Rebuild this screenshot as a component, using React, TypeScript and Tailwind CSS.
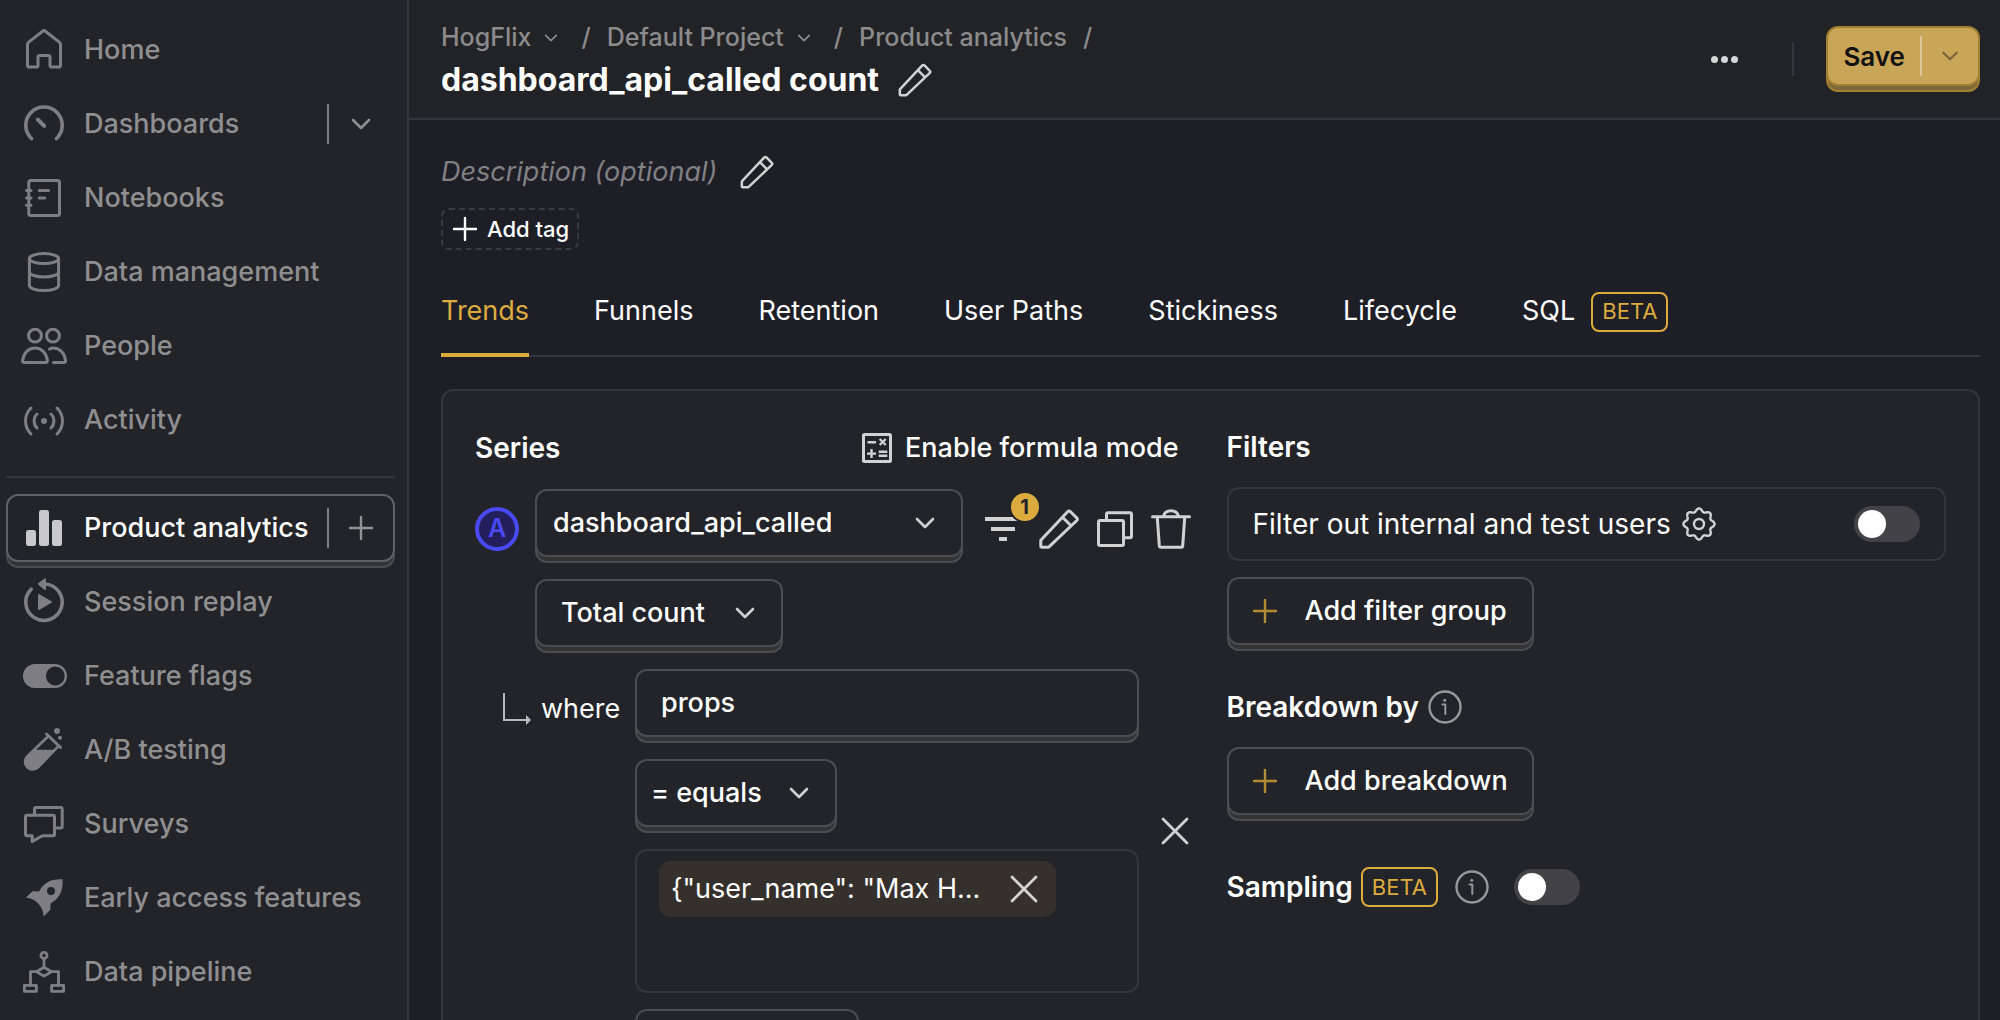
import type { ReactNode } from "react";

type IconProps = { className?: string };

function Svg({ size = 48, className = "size-12", children }: { size?: number; className?: string; children: ReactNode }) {
  return (
    <svg
      viewBox={`0 0 ${size} ${size}`}
      className={`shrink-0 ${className}`}
      fill="none"
      stroke="currentColor"
      strokeWidth={3}
      strokeLinecap="round"
      strokeLinejoin="round"
      aria-hidden="true"
    >
      {children}
    </svg>
  );
}

const HomeIcon = () => (
  <Svg>
    <path d="M7.5 18.5c0-1 .4-1.8 1.2-2.4L22.6 5.2c.8-.7 2-.7 2.8 0l13.9 10.9c.8.6 1.2 1.4 1.2 2.4v21c0 .9-.7 1.6-1.6 1.6h-7.3c-.9 0-1.6-.7-1.6-1.6v-8.2c0-1-.8-1.8-1.8-1.8h-8.400c-1 0-1.800.8-1.800 1.800v8.200c0 .9-.7 1.600-1.600 1.600H9.100c-.9 0-1.600-.7-1.600-1.600z" />
  </Svg>
);

const DashboardIcon = () => (
  <Svg>
    <path d="M11.5 38.5A18.2 18.2 0 1 1 36.5 38.5" strokeWidth={3.6} />
    <path d="M17.8 19.5l6.4 6.4" strokeWidth={4} />
  </Svg>
);

const NotebookIcon = () => (
  <Svg>
    <rect x="8.8" y="6.5" width="30.7" height="35" rx="2" />
    <path d="M6.5 16.5H11M6.5 24H11M6.5 31.3H11M19.3 16.5h9.2M19.3 24h5.4" />
  </Svg>
);

const DatabaseIcon = () => (
  <Svg>
    <ellipse cx="24" cy="10.6" rx="14.6" ry="5" />
    <path d="M9.4 10.6v27c0 2.7 6.5 4.9 14.6 4.9s14.6-2.2 14.6-4.9v-27M9.4 24c0 2.7 6.5 4.9 14.6 4.9s14.6-2.2 14.6-4.9" />
  </Svg>
);

const PeopleIcon = () => (
  <Svg>
    <circle cx="15" cy="13.7" r="6.4" />
    <circle cx="33" cy="13.7" r="6.4" />
    <path d="M4 40.4c-.8 0-1.5-.7-1.4-1.6C3.4 31 8.5 26 15 26s11.6 5 12.4 12.8c.1.9-.6 1.6-1.4 1.6zM29.5 27c1.100-.6 2.300-1 3.700-1 6.500 0 11.600 5 12.400 12.800.1.900-.6 1.600-1.400 1.600H33.500" />
  </Svg>
);

const ActivityIcon = () => (
  <Svg>
    <circle cx="24" cy="25" r="3" fill="currentColor" stroke="none" />
    <path d="M17 18c-3.8 3.4-3.8 10.6 0 14M31 18c3.8 3.4 3.8 10.6 0 14M11 12c-7.3 7.4-7.3 18.6 0 26M37 12c7.3 7.4 7.3 18.6 0 26" />
  </Svg>
);

const BarsIcon = () => (
  <Svg>
    <g fill="currentColor" stroke="none">
      <rect x="6" y="26" width="10" height="16" rx="2.5" />
      <rect x="19" y="6" width="10" height="36" rx="2.5" />
      <rect x="32" y="16" width="10" height="26" rx="2.5" />
    </g>
  </Svg>
);

const ReplayIcon = () => (
  <Svg>
    <path d="M11.2 11.2A18.2 18.2 0 1 0 25 6" strokeWidth={3.6} />
    <path d="M19 6l6-4.7v9.6z" fill="currentColor" strokeWidth={2} />
    <path d="M19 17v14l12-7z" fill="currentColor" strokeWidth={2} />
  </Svg>
);

const FlagIcon = () => (
  <Svg>
    <path
      d="M15 12h20a12 12 0 0 1 0 24H15a12 12 0 0 1 0-24zM35.3 14.6a9.4 9.4 0 1 0 0 18.8 9.4 9.4 0 0 0 0-18.8z"
      fill="currentColor"
      fillRule="evenodd"
      stroke="none"
    />
  </Svg>
);

const TestTubeIcon = () => (
  <Svg>
    <circle cx="37" cy="5" r="3" fill="currentColor" stroke="none" />
    <circle cx="40" cy="11.8" r="2" fill="currentColor" stroke="none" />
    <path d="M26.5 8l14 13.5" />
    <path d="M28.5 10L7.2 30.5a7.6 7.6 0 0 0 11 10.700L38.700 19.800" strokeWidth={2.6} />
    <path d="M13 24.5h21.500L18.200 41.200a7.600 7.600 0 0 1-11-10.700z" fill="currentColor" strokeWidth={1.5} />
  </Svg>
);

const SurveysIcon = () => (
  <Svg>
    <path d="M14.500 13.500V9c0-.9.700-1.500 1.500-1.500h24.700c.900 0 1.500.700 1.500 1.500v17.600c0 .9-.7 1.500-1.500 1.500H36" />
    <path d="M7 15.300h26c.9 0 1.500.700 1.500 1.500v17.400c0 .9-.7 1.500-1.500 1.500H22.500l-10.300 5.700v-5.700H7c-.9 0-1.500-.7-1.500-1.500V16.800c0-.9.700-1.500 1.500-1.500z" />
  </Svg>
);

const RocketIcon = () => (
  <Svg>
    <path
      d="M42.500 5.300C31 4.500 23.500 9 19 17.400l-6.500-.2L6 23.600C15 24.500 23 32 23.700 42.400L30.500 35.500V29.500C39 25 43.500 17 42.500 5.300zM31 13a4 4 0 1 1 0 8 4 4 0 0 1 0-8z"
      fill="currentColor"
      fillRule="evenodd"
      stroke="none"
    />
  </Svg>
);

const PipelineIcon = () => (
  <Svg>
    <g strokeWidth={2.8}>
      <circle cx="24" cy="7.4" r="3.1" />
      <path d="M24 10.500v8.800M24 19.300l7.500 4.400-7.500 4.400-7.500-4.400zM16.500 23.700h-6v13M31.500 23.700h7v13" />
      <rect x="4.4" y="37.4" width="12" height="6" />
      <rect x="31.6" y="37.4" width="12" height="6" />
    </g>
  </Svg>
);

const PencilIcon = ({ className }: IconProps) => (
  <Svg className={className}>
    <path d="M5.800 35.200L32.800 6.500c.7-.8 1.700-.8 2.500 0l6.500 6.500c.8.700.8 1.700 0 2.500L13.700 42.200H7c-.7 0-1.200-.5-1.200-1.200zM27.500 12.200l8.600 8.600" />
  </Svg>
);

const CopyIcon = () => (
  <Svg>
    <path d="M15.500 14V9.300c0-.9.700-1.500 1.500-1.500h22c.9 0 1.500.700 1.500 1.500v22c0 .9-.7 1.500-1.500 1.500h-4.500" />
    <rect x="7.5" y="15.5" width="25" height="25" rx="1.5" />
  </Svg>
);

const TrashIcon = () => (
  <Svg>
    <path d="M5.500 11.700h37M16.500 11c1-3.200 3.700-5.200 7.500-5.200s6.500 2 7.500 5.200M10.300 12.500l2 28.200c.1.900.7 1.500 1.500 1.500h20.400c.9 0 1.500-.7 1.500-1.500l2-28.200" />
  </Svg>
);

const FilterIcon = () => (
  <Svg>
    <path d="M6 12h36v4H6zM12 22h24v4H12zM20 32h8v4h-8z" fill="currentColor" stroke="none" />
  </Svg>
);

const FormulaIcon = () => (
  <Svg size={36} className="size-9">
    <rect x="4.5" y="4.5" width="27" height="27" rx="1" />
    <path
      d="M8.500 12.200h8.500M20.700 9l6 6M26.700 9l-6 6M8 23.600h9M12.500 19.100v9M19.700 21.700h8.600M19.700 25.800h8.600"
      strokeWidth={2.4}
      strokeLinecap="butt"
    />
  </Svg>
);

const gearPath = (() => {
  const points: string[] = [];
  for (let i = 0; i < 160; i++) {
    const angle = (i / 160) * Math.PI * 2;
    const radius = 14 + 1.6 * Math.cos(8 * angle);
    points.push(`${(18 + radius * Math.cos(angle)).toFixed(2)} ${(18 + radius * Math.sin(angle)).toFixed(2)}`);
  }
  return `M${points.join("L")}Z`;
})();

const GearIcon = () => (
  <Svg size={36} className="size-9">
    <path d={gearPath} strokeWidth={2.4} />
    <circle cx="18" cy="18" r="5" strokeWidth={2.4} />
  </Svg>
);

const InfoIcon = () => (
  <Svg size={36} className="size-9 text-[#98989b]">
    <circle cx="18" cy="18" r="15.5" strokeWidth={2.4} />
    <circle cx="17.8" cy="11.3" r="1.5" fill="currentColor" stroke="none" />
    <path d="M15.500 15.500h2.800V25" strokeWidth={2} />
  </Svg>
);

const ChevronIcon = ({ className = "size-6" }: IconProps) => (
  <Svg size={24} className={className}>
    <path d="M4 8l8 8 8-8" strokeWidth={2.6} />
  </Svg>
);

const PlusIcon = ({ className = "size-7" }: IconProps) => (
  <Svg size={28} className={className}>
    <path d="M14 3v22M3 14h22" strokeWidth={2.4} />
  </Svg>
);

const CrossIcon = () => (
  <Svg size={36} className="size-9">
    <path d="M6 6l24 24M30 6L6 30" strokeWidth={2.8} />
  </Svg>
);

const ArrowIcon = () => (
  <svg viewBox="0 0 30 34" className="h-[34px] w-[30px] shrink-0 text-[#b8b8ba]" aria-hidden="true">
    <path d="M1 1v27h22" fill="none" stroke="currentColor" strokeWidth="2" />
    <path d="M23 23l5 5-5 5z" fill="currentColor" />
  </svg>
);

const upperNav = [
  { label: "Home", icon: <HomeIcon /> },
  { label: "Dashboards", icon: <DashboardIcon />, chevron: true },
  { label: "Notebooks", icon: <NotebookIcon /> },
  { label: "Data management", icon: <DatabaseIcon /> },
  { label: "People", icon: <PeopleIcon /> },
  { label: "Activity", icon: <ActivityIcon /> },
];

const lowerNav = [
  { label: "Session replay", icon: <ReplayIcon /> },
  { label: "Feature flags", icon: <FlagIcon /> },
  { label: "A/B testing", icon: <TestTubeIcon /> },
  { label: "Surveys", icon: <SurveysIcon /> },
  { label: "Early access features", icon: <RocketIcon /> },
  { label: "Data pipeline", icon: <PipelineIcon /> },
];

function NavRow({ label, icon, chevron }: { label: string; icon: ReactNode; chevron?: boolean }) {
  return (
    <li className="flex h-[74px] items-center px-3.5 text-[#8f8f91]">
      <a href="#" className="flex flex-1 items-center gap-4">
        <span className="text-[#7f7f83]">{icon}</span>
        {label}
      </a>
      {chevron && (
        <button aria-label={`Open ${label}`} className="flex h-10 w-[54px] items-center justify-center border-l-2 border-[#7f7f83] pl-3">
          <ChevronIcon />
        </button>
      )}
    </li>
  );
}

function Sidebar() {
  return (
    <nav className="w-[409px] shrink-0 border-r-2 border-[#35363c] bg-[#232429] pl-1.5 pr-3 pt-[13px] text-[27px] font-medium">
      <ul>
        {upperNav.map((item) => (
          <NavRow key={item.label} {...item} />
        ))}
      </ul>
      <hr className="mb-[13px] mt-[19px] border-t-2 border-[#35363c]" />
      <ul>
        <li className="flex h-[74px] items-center">
          <div className="flex h-[68px] flex-1 items-center rounded-xl border-2 border-[#606166] px-3 text-white shadow-[0_6px_0_-2px_#343435,0_6px_0_0_#4c4d51]">
            <a href="#" aria-current="page" className="flex flex-1 items-center gap-4 whitespace-nowrap">
              <span className="text-[#c9c9cb]">
                <BarsIcon />
              </span>
              Product analytics
            </a>
            <button aria-label="New insight" className="flex h-10 w-[54px] shrink-0 items-center justify-center border-l-2 border-[#7f7f83] pl-3 text-[#929295]">
              <PlusIcon />
            </button>
          </div>
        </li>
        {lowerNav.map((item) => (
          <NavRow key={item.label} {...item} />
        ))}
      </ul>
    </nav>
  );
}

function Header() {
  return (
    <header className="flex items-center justify-between border-b-2 border-[#35363c] bg-[#222327] pl-8 pr-5">
      <div className="flex flex-col pb-3.5 pt-5">
        <nav aria-label="Breadcrumb" className="flex h-9 items-center text-[25px] font-medium text-[#8b8b8d]">
          <button className="flex items-center gap-3">
            HogFlix
            <ChevronIcon className="size-4" />
          </button>
          <span className="ml-5.5 mr-4">/</span>
          <button className="flex items-center gap-3">
            Default Project
            <ChevronIcon className="size-4" />
          </button>
          <span className="ml-5.5 mr-4">/</span>
          <a href="#">Product analytics</a>
          <span className="ml-4">/</span>
        </nav>
        <div className="flex h-12 items-center gap-4">
          <h1 className="text-[32px] font-bold text-white">dashboard_api_called count</h1>
          <button aria-label="Edit name" className="text-[#d2d2d2]">
            <PencilIcon className="size-10" />
          </button>
        </div>
      </div>
      <div className="flex items-center">
        <button aria-label="More" className="flex gap-[3px] p-2">
          <span className="size-[7px] rounded-full bg-[#d6d6d6]" />
          <span className="size-[7px] rounded-full bg-[#d6d6d6]" />
          <span className="size-[7px] rounded-full bg-[#d6d6d6]" />
        </button>
        <span className="ml-[46px] mr-8 h-[34px] w-0.5 bg-[#35363c]" />
        <div className="mb-1.5 flex h-[60px] items-center rounded-xl border-2 border-[#a17f32] bg-[#c9a557] shadow-[0_6px_0_-2px_#7f693b,0_6px_0_0_#a17f32]">
          <button className="px-[15px] text-[26px] font-semibold text-[#111]">Save</button>
          <button aria-label="More save options" className="flex h-10 w-[58px] items-center justify-center border-l-2 border-[#dcc698] text-[#78633a]">
            <ChevronIcon className="size-5" />
          </button>
        </div>
      </div>
    </header>
  );
}

const tabs = ["Funnels", "Retention", "User Paths", "Stickiness", "Lifecycle"];

function Beta() {
  return (
    <span className="flex h-10 items-center rounded-lg border-2 border-[#dcab3e] px-[9px] text-[22px] font-normal text-[#dcab3e]">
      BETA
    </span>
  );
}

function Tabs() {
  return (
    <div role="tablist" className="mt-[18px] flex gap-[65px] border-b-2 border-[#35363c] text-[27px] text-white">
      <button role="tab" aria-selected="true" className="-mb-0.5 h-[89px] border-b-4 border-[#dcab3e] pt-0.5 text-[#dcab3e]">
        Trends
      </button>
      {tabs.map((tab) => (
        <button key={tab} role="tab" aria-selected="false" className="-mb-0.5 h-[89px] border-b-4 border-transparent pt-0.5">
          {tab}
        </button>
      ))}
      <button role="tab" aria-selected="false" className="-mb-0.5 flex h-[89px] items-center gap-4 border-b-4 border-transparent pt-0.5">
        SQL
        <Beta />
      </button>
    </div>
  );
}

const bevel =
  "mb-1.5 h-[68px] rounded-xl border-2 border-[#4c4d51] bg-[#232429] text-[27px] font-medium text-white shadow-[0_6px_0_-2px_#343435,0_6px_0_0_#4c4d51]";

function Dropdown({ label, value, className, selectClass }: { label: string; value: string; className?: string; selectClass: string }) {
  return (
    <div className={`relative ${className ?? ""}`}>
      <select aria-label={label} className={`${bevel} block appearance-none ${selectClass}`}>
        <option>{value}</option>
      </select>
      <span className="pointer-events-none absolute right-[26px] top-[22px] text-[#d0d0d0]">
        <ChevronIcon />
      </span>
    </div>
  );
}

function Toggle({ label }: { label: string }) {
  return (
    <label className="flex cursor-pointer">
      <input type="checkbox" role="switch" aria-label={label} className="peer sr-only" />
      <span className="flex h-9 w-[66px] items-center rounded-full bg-[#434246] px-1 peer-checked:justify-end">
        <span className="size-7 rounded-full bg-white" />
      </span>
    </label>
  );
}

function SeriesColumn() {
  return (
    <section>
      <div className="flex h-[50px] items-center justify-between pr-4">
        <h2 className="text-[28px] font-semibold text-white">Series</h2>
        <button className="flex items-center gap-2.5 text-[27px] font-medium text-white">
          <span className="text-[#d2d2d2]">
            <FormulaIcon />
          </span>
          Enable formula mode
        </button>
      </div>
      <div className="mt-4 flex items-center gap-4">
        <span className="mt-1.5 flex size-11 shrink-0 items-center justify-center rounded-full border-4 border-[#4a4af4] bg-[#221f5c] text-[25px] font-semibold text-[#4a4af4]">
          A
        </span>
        <Dropdown label="Event" value="dashboard_api_called" className="flex-1" selectClass="w-full pl-4 pr-16" />
        <div className="mt-1.5 flex gap-2 text-[#d2d2d2]">
          <button aria-label="Filters, 1 active" className="relative">
            <FilterIcon />
            <span className="absolute -top-3 left-8 flex size-7 items-center justify-center rounded-full bg-[#dcab3e] text-[20px] font-bold text-[#232429] ring-2 ring-[#232429]">
              1
            </span>
          </button>
          <button aria-label="Rename series">
            <PencilIcon />
          </button>
          <button aria-label="Duplicate series">
            <CopyIcon />
          </button>
          <button aria-label="Delete series">
            <TrashIcon />
          </button>
        </div>
      </div>
      <div className="mt-4 flex pl-[60px]">
        <Dropdown label="Aggregation" value="Total count" selectClass="w-[248px] pl-6 pr-16" />
      </div>
      <div className="mt-4 flex">
        <div className="flex h-20 w-40 shrink-0 items-center gap-2 pl-7 text-[27px] text-white">
          <ArrowIcon />
          where
        </div>
        <div className="flex min-w-0 flex-1 flex-col gap-4">
          <button className={`${bevel} px-6 text-left`}>props</button>
          <div className="flex">
            <Dropdown label="Operator" value="= equals" selectClass="w-[202px] pl-3.5 pr-16" />
          </div>
          <div className="flex h-36 items-start rounded-xl border-2 border-[#35363c] px-[22px] py-2.5">
            <span className="flex h-14 shrink-0 items-center gap-[26px] rounded-xl bg-[#36302d] pl-3 pr-3.5 text-[27px] text-white">
              {'{"user_name": "Max H...'}
              <button aria-label="Remove value" className="text-[#d2d2d2]">
                <CrossIcon />
              </button>
            </span>
            <input aria-label="Value" className="h-14 w-0 min-w-0 flex-1 bg-transparent outline-none" />
          </div>
        </div>
        <div className="ml-4 flex w-10 items-center justify-center">
          <button aria-label="Remove filter" className="text-[#d2d2d2]">
            <CrossIcon />
          </button>
        </div>
      </div>
      <div className="mt-4 pl-40">
        <button aria-label="Add another filter" className={`${bevel} w-56`} />
      </div>
    </section>
  );
}

function AddButton({ children }: { children: ReactNode }) {
  return (
    <button className={`${bevel} flex w-[307px] items-center gap-[26px] whitespace-nowrap pl-[22px]`}>
      <span className="text-[#b38d36]">
        <PlusIcon />
      </span>
      {children}
    </button>
  );
}

function FiltersColumn() {
  return (
    <section className="flex flex-col gap-8">
      <div>
        <h2 className="flex h-12 items-center text-[28px] font-semibold text-white">Filters</h2>
        <div className="my-4 flex h-[74px] items-center justify-between rounded-xl border-2 border-[#35363c] px-6">
          <span className="flex items-center gap-2.5 text-[28px] text-white">
            Filter out internal and test users
            <a href="#" aria-label="Filter settings" className="text-[#d2d2d2]">
              <GearIcon />
            </a>
          </span>
          <Toggle label="Filter out internal and test users" />
        </div>
        <AddButton>Add filter group</AddButton>
      </div>
      <div>
        <h2 className="mb-4 flex h-12 items-center gap-2 text-[28px] font-semibold text-white">
          Breakdown by
          <InfoIcon />
        </h2>
        <AddButton>Add breakdown</AddButton>
      </div>
      <div className="flex h-[68px] items-center">
        <h2 className="mr-2 text-[28px] font-semibold text-white">Sampling</h2>
        <Beta />
        <span className="ml-4 mr-6">
          <InfoIcon />
        </span>
        <Toggle label="Sampling" />
      </div>
    </section>
  );
}

export default function App() {
  return (
    <div className="flex h-screen overflow-hidden bg-[#1e1e27] font-['Inter',sans-serif]">
      <Sidebar />
      <div className="min-w-0 flex-1">
        <Header />
        <main className="pl-8 pr-5 pt-7">
          <div className="flex h-12 items-center gap-5">
            <p className="text-[27px] italic text-[#818184]">Description (optional)</p>
            <button aria-label="Edit description" className="text-[#d2d2d2]">
              <PencilIcon className="size-10" />
            </button>
          </div>
          <button className="mt-3 flex h-[42px] items-center gap-2 rounded-lg border-2 border-dashed border-[#3a3b40] px-2 text-[22px] font-medium text-white">
            <PlusIcon />
            Add tag
          </button>
          <Tabs />
          <div className="mt-8 grid grid-cols-2 gap-8 rounded-xl border-2 border-[#35363c] bg-[#232429] p-8">
            <SeriesColumn />
            <FiltersColumn />
          </div>
        </main>
      </div>
    </div>
  );
}
